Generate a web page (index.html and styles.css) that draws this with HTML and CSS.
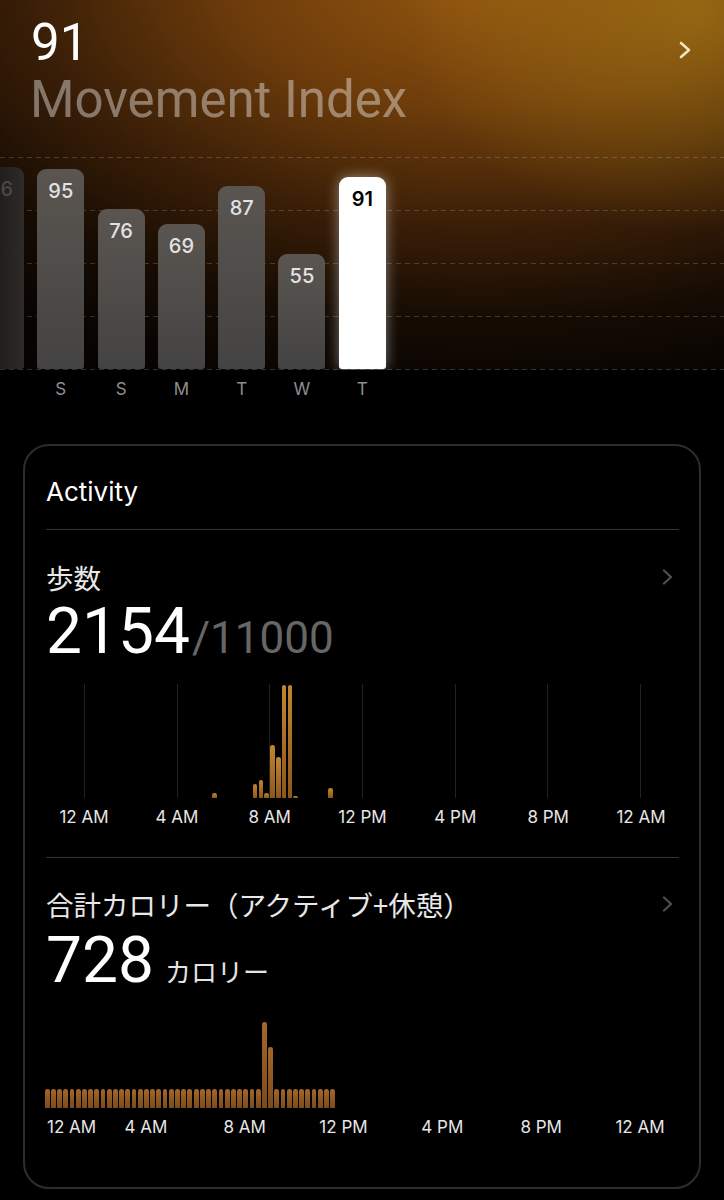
FILE: index.html
```html
<!DOCTYPE html>
<html lang="ja">
<head>
<meta charset="utf-8">
<title>Movement Index</title>
<link rel="stylesheet" href="styles.css">
</head>
<body>
<section class="hero">
  <div class="hero-top">
    <div class="score">91</div>
    <svg class="chev-top" width="14" height="18" viewBox="0 0 14 18"><polyline points="3,2 11,9 3,16" fill="none" stroke="#f2e4c6" stroke-width="2.6" stroke-linecap="round" stroke-linejoin="round"/></svg>
  </div>
  <div class="hero-title">Movement Index</div>
  <div class="week-chart">
    <div class="dash-lines">
      <div class="dash"></div><div class="dash"></div><div class="dash"></div><div class="dash"></div><div class="dash"></div>
    </div>
    <div class="week-bars">
      <div class="wbar faded" style="height:202px"><span>96</span></div>
      <div class="wbar" style="height:200px"><span>95</span></div>
      <div class="wbar" style="height:160px"><span>76</span></div>
      <div class="wbar" style="height:145px"><span>69</span></div>
      <div class="wbar" style="height:183px"><span>87</span></div>
      <div class="wbar" style="height:115px"><span>55</span></div>
      <div class="wbar today" style="height:192px"><span>91</span></div>
    </div>
  </div>
</section>
<div class="days">
  <div class="day"></div>
  <div class="day">S</div>
  <div class="day">S</div>
  <div class="day">M</div>
  <div class="day">T</div>
  <div class="day">W</div>
  <div class="day">T</div>
</div>

<section class="card">
  <div class="card-head">Activity</div>
  <div class="divider"></div>

  <div class="metric">
    <div class="metric-row">
      <div class="metric-title">歩数</div>
      <svg class="chev" width="12" height="16" viewBox="0 0 12 16"><polyline points="2,1.5 9,8 2,14.5" fill="none" stroke="#4f4f4f" stroke-width="2.2" stroke-linecap="round" stroke-linejoin="round"/></svg>
    </div>
    <div class="big">2154<span class="goal">/11000</span></div>
    <div class="plot steps-plot">
      <div class="vlines">
        <div class="vl"></div><div class="vl"></div><div class="vl"></div><div class="vl"></div><div class="vl"></div><div class="vl"></div><div class="vl"></div>
      </div>
      <div class="qbars">
        <div class="qbar steps" style="grid-column:23;height:5px"></div>
        <div class="qbar steps" style="grid-column:30;height:14px"></div>
        <div class="qbar steps" style="grid-column:31;height:18px"></div>
        <div class="qbar steps" style="grid-column:32;height:5px"></div>
        <div class="qbar steps" style="grid-column:33;height:53px"></div>
        <div class="qbar steps" style="grid-column:34;height:41px"></div>
        <div class="qbar steps" style="grid-column:35;height:113px"></div>
        <div class="qbar steps" style="grid-column:36;height:113px"></div>
        <div class="qbar steps" style="grid-column:37;height:2px"></div>
        <div class="qbar steps" style="grid-column:43;height:10px"></div>
      </div>
    </div>
    <div class="axis steps-axis">
      <div class="tick"><span>12 AM</span></div>
      <div class="tick"><span>4 AM</span></div>
      <div class="tick"><span>8 AM</span></div>
      <div class="tick"><span>12 PM</span></div>
      <div class="tick"><span>4 PM</span></div>
      <div class="tick"><span>8 PM</span></div>
      <div class="tick"><span>12 AM</span></div>
    </div>
  </div>
  <div class="divider"></div>

  <div class="metric last">
    <div class="metric-row">
      <div class="metric-title">合計カロリー（アクティブ+休憩）</div>
      <svg class="chev" width="12" height="16" viewBox="0 0 12 16"><polyline points="2,1.5 9,8 2,14.5" fill="none" stroke="#4f4f4f" stroke-width="2.2" stroke-linecap="round" stroke-linejoin="round"/></svg>
    </div>
    <div class="big big-cal">728<span class="unit">カロリー</span></div>
    <div class="plot cal-plot">
      <div class="qbars">
        <div class="qbar cal" style="grid-column:1;height:19px"></div>
        <div class="qbar cal" style="grid-column:2;height:19px"></div>
        <div class="qbar cal" style="grid-column:3;height:19px"></div>
        <div class="qbar cal" style="grid-column:4;height:19px"></div>
        <div class="qbar cal" style="grid-column:5;height:19px"></div>
        <div class="qbar cal" style="grid-column:6;height:19px"></div>
        <div class="qbar cal" style="grid-column:7;height:19px"></div>
        <div class="qbar cal" style="grid-column:8;height:19px"></div>
        <div class="qbar cal" style="grid-column:9;height:19px"></div>
        <div class="qbar cal" style="grid-column:10;height:19px"></div>
        <div class="qbar cal" style="grid-column:11;height:19px"></div>
        <div class="qbar cal" style="grid-column:12;height:19px"></div>
        <div class="qbar cal" style="grid-column:13;height:19px"></div>
        <div class="qbar cal" style="grid-column:14;height:19px"></div>
        <div class="qbar cal" style="grid-column:15;height:19px"></div>
        <div class="qbar cal" style="grid-column:16;height:19px"></div>
        <div class="qbar cal" style="grid-column:17;height:19px"></div>
        <div class="qbar cal" style="grid-column:18;height:19px"></div>
        <div class="qbar cal" style="grid-column:19;height:19px"></div>
        <div class="qbar cal" style="grid-column:20;height:19px"></div>
        <div class="qbar cal" style="grid-column:21;height:19px"></div>
        <div class="qbar cal" style="grid-column:22;height:19px"></div>
        <div class="qbar cal" style="grid-column:23;height:19px"></div>
        <div class="qbar cal" style="grid-column:24;height:19px"></div>
        <div class="qbar cal" style="grid-column:25;height:19px"></div>
        <div class="qbar cal" style="grid-column:26;height:19px"></div>
        <div class="qbar cal" style="grid-column:27;height:19px"></div>
        <div class="qbar cal" style="grid-column:28;height:19px"></div>
        <div class="qbar cal" style="grid-column:29;height:19px"></div>
        <div class="qbar cal" style="grid-column:30;height:19px"></div>
        <div class="qbar cal" style="grid-column:31;height:19px"></div>
        <div class="qbar cal" style="grid-column:32;height:19px"></div>
        <div class="qbar cal" style="grid-column:33;height:19px"></div>
        <div class="qbar cal" style="grid-column:34;height:19px"></div>
        <div class="qbar cal" style="grid-column:35;height:19px"></div>
        <div class="qbar cal" style="grid-column:36;height:86px"></div>
        <div class="qbar cal" style="grid-column:37;height:61px"></div>
        <div class="qbar cal" style="grid-column:38;height:19px"></div>
        <div class="qbar cal" style="grid-column:39;height:19px"></div>
        <div class="qbar cal" style="grid-column:40;height:19px"></div>
        <div class="qbar cal" style="grid-column:41;height:19px"></div>
        <div class="qbar cal" style="grid-column:42;height:19px"></div>
        <div class="qbar cal" style="grid-column:43;height:19px"></div>
        <div class="qbar cal" style="grid-column:44;height:19px"></div>
        <div class="qbar cal" style="grid-column:45;height:19px"></div>
        <div class="qbar cal" style="grid-column:46;height:19px"></div>
        <div class="qbar cal" style="grid-column:47;height:19px"></div>
      </div>
    </div>
    <div class="axis cal-axis">
      <div class="tick first"><span>12 AM</span></div>
      <div class="tick"><span>4 AM</span></div>
      <div class="tick"><span>8 AM</span></div>
      <div class="tick"><span>12 PM</span></div>
      <div class="tick"><span>4 PM</span></div>
      <div class="tick"><span>8 PM</span></div>
      <div class="tick"><span>12 AM</span></div>
    </div>
  </div>
</section>
</body>
</html>
```

FILE: styles.css
```css
* { box-sizing: border-box; }

html, body {
  margin: 0;
  padding: 0;
  background: #000;
  overflow-x: hidden;
}

body {
  font-family: Inter, "Noto Sans CJK JP", sans-serif;
  color: #fff;
  width: 724px;
}

/* ---------- hero ---------- */
.hero {
  padding-top: 17px;
  overflow: hidden;
  background:
    radial-gradient(ellipse 420px 320px at 96% 2%, rgba(168, 124, 22, 0.65), rgba(168, 124, 22, 0) 70%),
    radial-gradient(ellipse 780px 430px at 66% -6%, #93560f 0%, #6f3d0b 30%, #3b1f07 57%, #150b03 80%, #060302 100%);
}

.hero-top {
  display: flex;
  justify-content: space-between;
  align-items: flex-start;
  padding: 0 32px 0 31px;
}

.score {
  font-family: Roboto, sans-serif;
  font-size: 51px;
  line-height: 51px;
  color: #fff;
}

.chev-top {
  margin-top: 24px;
}

.hero-title {
  font-family: Roboto, sans-serif;
  font-size: 51px;
  line-height: 51px;
  margin-top: 6px;
  padding-left: 30px;
  color: rgba(255, 255, 255, 0.4);
}

.week-chart {
  display: grid;
  margin-top: 32px;
  height: 213px;
}

.dash-lines,
.week-bars {
  grid-area: 1 / 1;
}

.dash-lines {
  display: flex;
  flex-direction: column;
  justify-content: space-between;
}

.dash {
  height: 1px;
  background: repeating-linear-gradient(to right, rgba(255, 255, 255, 0.17) 0 5px, transparent 5px 9px);
}

.week-bars {
  display: flex;
  align-items: flex-end;
  gap: 13.3px;
  margin-left: -23px;
  padding-bottom: 1px;
}

.wbar {
  width: 47px;
  flex: none;
  border-radius: 9px 9px 3px 3px;
  background: linear-gradient(to bottom, #5a5550, #444343);
  display: flex;
  justify-content: center;
  padding-top: 10px;
  font-size: 20px;
  line-height: 24px;
  font-weight: 500;
  color: #e2e2e2;
}

.wbar.faded {
  background: linear-gradient(to right, #141210, #2e2b28);
  color: #4a4846;
  justify-content: flex-end;
  padding-right: 11px;
}

.wbar.today {
  background: #fff;
  color: #000;
  font-weight: 600;
  box-shadow: 0 0 14px rgba(255, 255, 255, 0.45);
}

.days {
  display: flex;
  gap: 13.3px;
  margin: 9px 0 0 -23px;
}

.day {
  width: 47px;
  flex: none;
  text-align: center;
  font-size: 17px;
  line-height: 20px;
  color: #8e8e8e;
}

/* ---------- card ---------- */
.card {
  margin: 45px 23px 0;
  border: 2px solid #2d2d2d;
  border-radius: 26px;
  padding: 0 20px 50px 21px;
}

.card-head {
  padding: 30px 0 21px;
  font-size: 26px;
  line-height: 32px;
  font-weight: 400;
  color: #fff;
}

.divider {
  height: 1px;
  background: #333;
}

.metric {
  padding: 32px 0 30px;
}

.metric.last {
  padding-top: 31px;
  padding-bottom: 0;
}

.metric-row {
  display: flex;
  justify-content: space-between;
  align-items: center;
}

.metric-title {
  font-family: "Noto Sans CJK JP", sans-serif;
  font-size: 27.5px;
  line-height: 30px;
  color: #e8e8e8;
}

.chev {
  margin-right: 5px;
}

.big {
  font-family: Roboto, "Noto Sans CJK JP", sans-serif;
  font-size: 64px;
  line-height: 64px;
  margin-top: 8px;
  color: #fff;
}

.big-cal {
  margin-top: 10px;
}

.goal {
  font-size: 44px;
  line-height: 1;
  color: #666;
  margin-left: 2px;
}

.unit {
  font-family: "Noto Sans CJK JP", sans-serif;
  font-size: 26px;
  line-height: 1;
  color: #e4e4e4;
  margin-left: 11px;
}

/* charts */
.plot {
  display: grid;
}

.steps-plot {
  height: 114px;
  margin: 20px 38px 0;
}

.cal-plot {
  height: 100px;
  margin: 15px 39px 0 -2px;
}

.vlines,
.qbars {
  grid-area: 1 / 1;
}

.vlines {
  display: flex;
  justify-content: space-between;
}

.vl {
  width: 1px;
  background: #222;
}

.qbars {
  display: grid;
  grid-template-columns: repeat(96, 1fr);
  align-items: end;
  justify-items: center;
}

.qbar {
  grid-row: 1;
  width: 4.6px;
  border-radius: 2.3px 2.3px 0.5px 0.5px;
}

.qbar.steps {
  background: linear-gradient(to bottom, #c08631, #8d5719);
}

.qbar.cal {
  width: 4.8px;
  background: linear-gradient(to bottom, #a3672a, #7c4a1b);
}

.axis {
  display: flex;
  justify-content: space-between;
  margin-top: 9px;
  font-size: 17px;
  line-height: 20px;
  color: #e6e6e6;
}

.steps-axis {
  margin-left: 38px;
  margin-right: 38px;
}

.cal-axis {
  margin-left: -2px;
  margin-right: 39px;
}

.tick {
  width: 0;
  display: flex;
  justify-content: center;
  white-space: nowrap;
}

.tick.first {
  justify-content: flex-start;
  padding-left: 3px;
}
```
